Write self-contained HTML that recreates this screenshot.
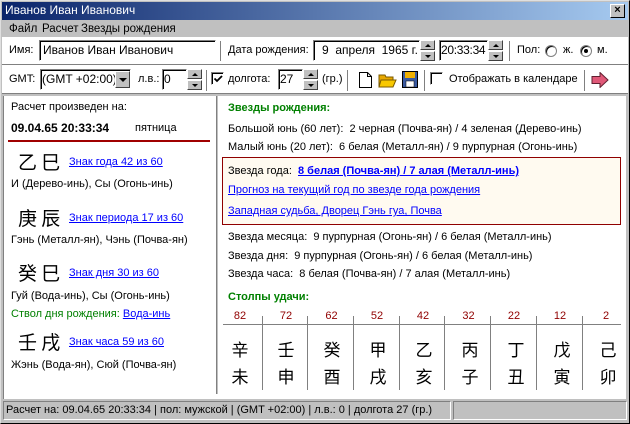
<!DOCTYPE html>
<html><head><meta charset="utf-8"><style>
*{margin:0;padding:0;box-sizing:border-box}
body{width:630px;height:424px;overflow:hidden;background:#c0c0c0;font-family:"Liberation Sans","Noto Sans CJK SC",sans-serif;font-size:11px;color:#000;position:relative}
.a{position:absolute;white-space:nowrap}
.lk{color:#0000ff;text-decoration:underline}
.g{color:#008000}
.cj{font-family:"Noto Sans CJK SC","WenQuanYi Zen Hei",sans-serif;font-size:19px;line-height:20px}
.cc{font-family:"Noto Sans CJK SC","WenQuanYi Zen Hei",sans-serif;font-size:17px;width:46px;text-align:center}
.in{background:#fff;border:1px solid;border-color:#808080 #fff #fff #808080;box-shadow:inset 1px 1px 0 #000;height:21px;line-height:19px;padding-left:3px;font-size:12px}
.sp{width:15px;height:21px}
.sp div{height:10px;background:#c0c0c0;border:1px solid;border-color:#fff #404040 #404040 #fff;position:relative}
.sp div+div{margin-top:1px}
.sp .u:after{content:"";position:absolute;left:4px;top:3px;border:3px solid transparent;border-top:0;border-bottom:3px solid #000}
.sp .d:after{content:"";position:absolute;left:4px;top:3px;border:3px solid transparent;border-bottom:0;border-top:3px solid #000}
.vs{width:2px;border-left:1px solid #808080;border-right:1px solid #fff}
.cb{width:13px;height:13px;background:#fff;border:1px solid;border-color:#808080 #fff #fff #808080;box-shadow:inset 1px 1px 0 #000}
.rd{width:12px;height:12px;border-radius:50%;background:#fff;border:1px solid #808080;box-shadow:inset 1px 1px 0 #000}
.t12{font-size:11px}
</style></head><body>
<div class="a" style="left:0;top:0;width:630px;height:424px;border:1px solid;border-color:#dfdfdf #000 #000 #dfdfdf"></div>
<div class="a" style="left:2px;top:2px;width:626px;height:18px;background:linear-gradient(90deg,#0a246a,#a6caf0)"></div>
<div class="a" style="left:5px;top:3px;color:#fff;font-size:12px">Иванов Иван Иванович</div>
<div class="a" style="left:610px;top:4px;width:15px;height:14px;background:#c0c0c0;border:1px solid;border-color:#fff #000 #000 #fff;font-size:11px;line-height:11px;text-align:center;font-weight:bold">×</div>
<div class="a" style="left:9px;top:23px;font-size:11.5px">Файл</div>
<div class="a" style="left:42px;top:23px;font-size:11.5px">Расчет</div>
<div class="a" style="left:81px;top:23px;font-size:11.5px">Звезды рождения</div>
<div class="a" style="left:2px;top:37px;width:626px;height:58px;background:#fff"></div>
<div class="a" style="left:2px;top:64px;width:626px;height:2px;border-top:1px solid #808080;border-bottom:1px solid #fff;background:#c0c0c0"></div>
<div class="a" style="left:2px;top:93px;width:626px;height:2px;background:#c0c0c0;border-top:1px solid #808080"></div>
<div class="a t12" style="left:9px;top:44px">Имя:</div>
<div class="a in" style="left:39px;top:40px;width:177px">Иванов Иван Иванович</div>
<div class="a vs" style="left:220px;top:41px;height:20px"></div>
<div class="a t12" style="left:228px;top:44px">Дата рождения:</div>
<div class="a in" style="left:313px;top:40px;width:107px;padding-left:8px">9 &nbsp;апреля &nbsp;1965 г.</div>
<div class="a sp" style="left:420px;top:40px"><div class="u"></div><div class="d"></div></div>
<div class="a in" style="left:439px;top:40px;width:49px;padding-left:1px;letter-spacing:-0.3px">20:33:34</div>
<div class="a sp" style="left:488px;top:40px"><div class="u"></div><div class="d"></div></div>
<div class="a vs" style="left:509px;top:41px;height:20px"></div>
<div class="a t12" style="left:517px;top:44px">Пол:</div>
<div class="a rd" style="left:545px;top:45px"></div>
<div class="a t12" style="left:563px;top:44px">ж.</div>
<div class="a rd" style="left:580px;top:45px"></div>
<div class="a" style="left:584px;top:49px;width:4px;height:4px;background:#000;border-radius:50%"></div>
<div class="a t12" style="left:597px;top:44px">м.</div>
<div class="a t12" style="left:9px;top:73px">GMT:</div>
<div class="a in" style="left:40px;top:69px;width:91px;padding-left:1px">(GMT +02:00)</div>
<div class="a" style="left:115px;top:71px;width:15px;height:17px;background:#c0c0c0;border:1px solid;border-color:#fff #404040 #404040 #fff"><div style="position:absolute;left:3px;top:6px;border:4px solid transparent;border-bottom:0;border-top:4px solid #000"></div></div>
<div class="a t12" style="left:138px;top:73px">л.в.:</div>
<div class="a in" style="left:162px;top:69px;width:25px;padding-left:1px">0</div>
<div class="a sp" style="left:187px;top:69px"><div class="u"></div><div class="d"></div></div>
<div class="a vs" style="left:206px;top:70px;height:21px"></div>
<div class="a cb" style="left:211px;top:72px"></div>
<svg class="a" style="left:213px;top:74px" width="10" height="10"><path d="M1.5 4.5l2.5 2.5 5-5" fill="none" stroke="#000" stroke-width="1.8"/></svg>
<div class="a t12" style="left:228px;top:73px">долгота:</div>
<div class="a in" style="left:278px;top:69px;width:25px;padding-left:1px">27</div>
<div class="a sp" style="left:303px;top:69px"><div class="u"></div><div class="d"></div></div>
<div class="a t12" style="left:322px;top:73px">(гр.)</div>
<div class="a vs" style="left:347px;top:70px;height:21px"></div>
<svg class="a" style="left:357px;top:71px" width="16" height="18"><path d="M2.5 1.5h8l4 4v11h-12z" fill="#fff" stroke="#000"/><path d="M10.5 1.5v4h4" fill="none" stroke="#000"/></svg>
<svg class="a" style="left:378px;top:72px" width="19" height="17"><path d="M1 3h6l1 2h7v9H1z" fill="#e8a800" stroke="#7a5a00"/><path d="M3 8h15l-3 7H1z" fill="#f8c800" stroke="#7a5a00"/></svg>
<svg class="a" style="left:402px;top:71px" width="16" height="17"><rect x="0.5" y="0.5" width="15" height="16" fill="#3a5aa0" stroke="#000"/><rect x="3" y="1" width="10" height="6" fill="#f0b000"/><rect x="4" y="10" width="8" height="6" fill="#fff" stroke="#000" stroke-width=".5"/></svg>
<div class="a vs" style="left:424px;top:70px;height:21px"></div>
<div class="a cb" style="left:430px;top:72px"></div>
<div class="a t12" style="left:449px;top:73px">Отображать в календаре</div>
<div class="a vs" style="left:584px;top:70px;height:21px"></div>
<svg class="a" style="left:591px;top:72px" width="18" height="16"><path d="M1 4.5h8v-4l8 7.5-8 7.5v-4H1z" fill="#e05878" stroke="#602030"/></svg>
<div class="a" style="left:3px;top:96px;width:623px;height:303px;background:#fff;border-left:1px solid #808080"></div>
<div class="a" style="left:216px;top:96px;width:2px;height:298px;background:#c0c0c0;border-left:1px solid #808080"></div>
<div class="a" style="left:11px;top:101px">Расчет произведен на:</div>
<div class="a" style="left:11px;top:121px;font-weight:bold;font-size:12px">09.04.65 20:33:34</div>
<div class="a" style="left:135px;top:122px">пятница</div>
<div class="a" style="left:8px;top:140px;width:202px;height:2px;background:#a00000"></div>
<div class="a cj" style="left:18px;top:152px">乙 巳</div>
<div class="a lk" style="left:69px;top:156px">Знак года 42 из 60</div>
<div class="a" style="left:11px;top:178px">И (Дерево-инь), Сы (Огонь-инь)</div>
<div class="a cj" style="left:18px;top:208px">庚 辰</div>
<div class="a lk" style="left:69px;top:212px">Знак периода 17 из 60</div>
<div class="a" style="left:11px;top:234px">Гэнь (Металл-ян), Чэнь (Почва-ян)</div>
<div class="a cj" style="left:18px;top:263px">癸 巳</div>
<div class="a lk" style="left:69px;top:267px">Знак дня 30 из 60</div>
<div class="a" style="left:11px;top:290px">Гуй (Вода-инь), Сы (Огонь-инь)</div>
<div class="a g" style="left:11px;top:308px">Ствол дня рождения: <span class="lk">Вода-инь</span></div>
<div class="a cj" style="left:18px;top:332px">壬 戌</div>
<div class="a lk" style="left:69px;top:336px">Знак часа 59 из 60</div>
<div class="a" style="left:11px;top:359px">Жэнь (Вода-ян), Сюй (Почва-ян)</div>
<div class="a g" style="left:228px;top:102px;font-weight:bold">Звезды рождения:</div>
<div class="a" style="left:228px;top:123px">Большой юнь (60 лет): &nbsp;2 черная (Почва-ян) / 4 зеленая (Дерево-инь)</div>
<div class="a" style="left:228px;top:141px">Малый юнь (20 лет): &nbsp;6 белая (Металл-ян) / 9 пурпурная (Огонь-инь)</div>
<div class="a" style="left:222px;top:157px;width:399px;height:68px;background:#fffaf0;border:1px solid #900000"></div>
<div class="a" style="left:228px;top:165px">Звезда года: &nbsp;<span class="lk" style="font-weight:bold">8 белая (Почва-ян) / 7 алая (Металл-инь)</span></div>
<div class="a lk" style="left:228px;top:184px">Прогноз на текущий год по звезде года рождения</div>
<div class="a lk" style="left:228px;top:205px">Западная судьба, Дворец Гэнь гуа, Почва</div>
<div class="a" style="left:228px;top:231px">Звезда месяца: &nbsp;9 пурпурная (Огонь-ян) / 6 белая (Металл-инь)</div>
<div class="a" style="left:228px;top:250px">Звезда дня: &nbsp;9 пурпурная (Огонь-ян) / 6 белая (Металл-инь)</div>
<div class="a" style="left:228px;top:268px">Звезда часа: &nbsp;8 белая (Почва-ян) / 7 алая (Металл-инь)</div>
<div class="a g" style="left:228px;top:291px;font-weight:bold">Столпы удачи:</div>
<div class="a" style="left:223px;top:324px;width:398px;height:1px;background:#808080"></div>
<div class="a" style="left:217px;top:310px;width:410px;height:84px">
<div style="position:absolute;left:45px;top:6px;width:1px;height:74px;background:#808080"></div>
<div style="position:absolute;left:90px;top:6px;width:1px;height:74px;background:#808080"></div>
<div style="position:absolute;left:136px;top:6px;width:1px;height:74px;background:#808080"></div>
<div style="position:absolute;left:182px;top:6px;width:1px;height:74px;background:#808080"></div>
<div style="position:absolute;left:227px;top:6px;width:1px;height:74px;background:#808080"></div>
<div style="position:absolute;left:273px;top:6px;width:1px;height:74px;background:#808080"></div>
<div style="position:absolute;left:319px;top:6px;width:1px;height:74px;background:#808080"></div>
<div style="position:absolute;left:365px;top:6px;width:1px;height:74px;background:#808080"></div>
</div>
<div class="a" style="left:217px;top:310px;display:flex;color:#900000">
<div style="width:46px;text-align:center">82</div><div style="width:46px;text-align:center">72</div><div style="width:45px;text-align:center">62</div><div style="width:46px;text-align:center">52</div><div style="width:46px;text-align:center">42</div><div style="width:45px;text-align:center">32</div><div style="width:46px;text-align:center">22</div><div style="width:46px;text-align:center">12</div><div style="width:46px;text-align:center">2</div>
</div>
<div class="a" style="left:217px;top:336px;display:flex">
<div class="cc">辛</div><div class="cc">壬</div><div class="cc">癸</div><div class="cc">甲</div><div class="cc">乙</div><div class="cc">丙</div><div class="cc">丁</div><div class="cc">戊</div><div class="cc">己</div>
</div>
<div class="a" style="left:217px;top:363px;display:flex">
<div class="cc">未</div><div class="cc">申</div><div class="cc">酉</div><div class="cc">戌</div><div class="cc">亥</div><div class="cc">子</div><div class="cc">丑</div><div class="cc">寅</div><div class="cc">卯</div>
</div>
<div class="a" style="left:3px;top:401px;width:448px;height:19px;border:1px solid;border-color:#808080 #fff #fff #808080;padding:2px 0 0 2px">Расчет на: 09.04.65 20:33:34 | пол: мужской | (GMT +02:00) | л.в.: 0 | долгота 27 (гр.)</div>
<div class="a" style="left:453px;top:401px;width:174px;height:19px;border:1px solid;border-color:#808080 #fff #fff #808080"></div>
</body></html>
